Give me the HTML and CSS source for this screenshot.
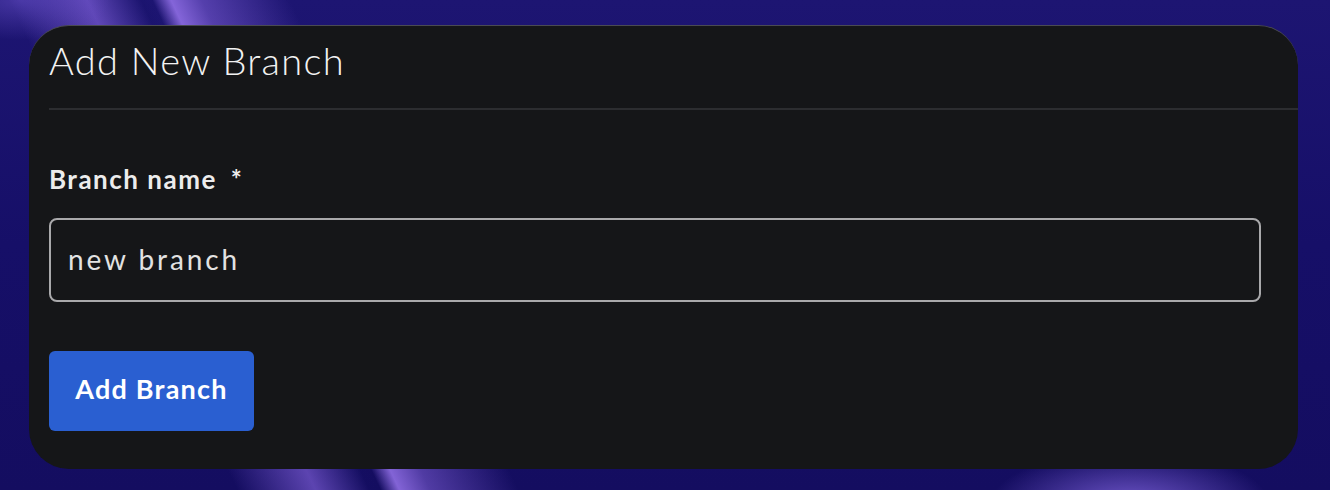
FILE: index.html
```html
<!DOCTYPE html>
<html>
<head>
  <meta charset="UTF-8" />
  <title>Add New Branch</title>
  <link rel="stylesheet" href="styles.css">
</head>
<body>

<div class="backdrop">
  <div class="branch-card">
    <div class="branch-card-header">
      <h2>Add New Branch</h2>
    </div>
    <form class="branch-form">
      <label class="field-label" for="branchName">Branch name <span class="required">*</span></label>
      <input id="branchName" class="field-input" type="text" value="new branch" />
      <button type="button" class="btn-primary">Add Branch</button>
    </form>
  </div>
</div>

</body>
</html>
```

FILE: styles.css
```css
html, body {
  margin: 0;
  height: 100%;
}

body {
  font-family: 'Lato', 'Noto Sans', sans-serif;
  overflow: hidden;
}

.backdrop {
  box-sizing: border-box;
  height: 490px;
  padding: 25px 32px 21px 29px;
  background:
    radial-gradient(ellipse 140px 55px at 1130px 505px, rgba(135, 105, 230, 0.8), rgba(135, 105, 230, 0) 100%),
    radial-gradient(ellipse 90px 40px at 20px 0px, rgba(110, 85, 210, 0.5), rgba(110, 85, 210, 0) 100%),
    linear-gradient(65deg,
      rgba(120, 90, 215, 0) 215px,
      rgba(140, 105, 230, 0.6) 286px,
      rgba(20, 15, 100, 0.2) 335px,
      rgba(20, 15, 100, 0) 345px,
      rgba(150, 115, 235, 0.85) 362px,
      rgba(140, 105, 230, 0.5) 390px,
      rgba(140, 105, 230, 0) 470px),
    linear-gradient(180deg, #1d1572 0%, #160f68 50%, #140d60 100%);
}

.branch-card {
  background: #151618;
  border-radius: 40px;
  border-top: 1px solid #4a4b52;
  height: 100%;
  box-sizing: border-box;
  color: #f2f2f2;
  overflow: hidden;
}

.branch-card-header {
  margin-left: 20px;
  height: 82px;
  border-bottom: 2px solid #2c2d30;
}

.branch-card-header h2 {
  margin: 0;
  padding-top: 11px;
  font-size: 38px;
  font-weight: 300;
  letter-spacing: 1.3px;
}

.branch-form {
  display: flex;
  flex-direction: column;
  align-items: flex-start;
  padding: 53px 37px 0 20px;
}

.field-label {
  font-size: 26px;
  font-weight: 700;
  letter-spacing: 1.5px;
  color: #ececec;
}

.required {
  margin-left: 6px;
}

.field-input {
  box-sizing: border-box;
  width: 100%;
  height: 84px;
  margin-top: 23px;
  padding: 0 17px 2px;
  background: transparent;
  border: 2px solid #a9a9ab;
  border-radius: 8px;
  color: #e2e2e2;
  font-family: inherit;
  font-size: 28px;
  letter-spacing: 2.9px;
  outline: none;
}

.btn-primary {
  margin-top: 49px;
  width: 205px;
  height: 80px;
  padding: 0 0 5px;
  border: none;
  border-radius: 6px;
  background: #2a5fd1;
  color: #ffffff;
  font-family: inherit;
  font-size: 27px;
  font-weight: 700;
  letter-spacing: 1.2px;
  cursor: pointer;
}
```
